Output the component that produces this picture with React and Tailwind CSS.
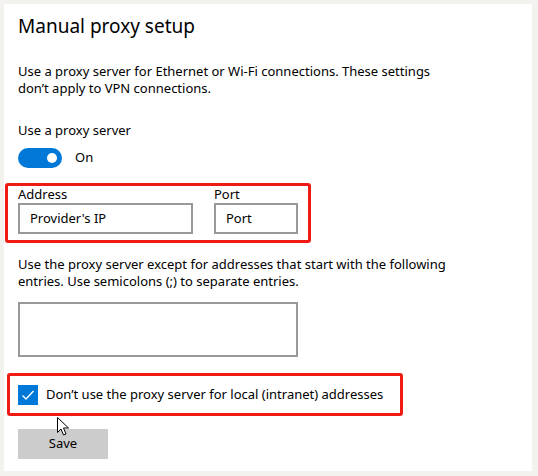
export default function App() {
  const font = { fontFamily: '"Noto Sans", "Open Sans", sans-serif' };
  return (
    <div className="w-[538px] h-[476px] bg-[#f3f2ee] p-[4px] relative" style={font}>
      <div className="w-[528px] h-[467px] bg-white pl-[14px] flex flex-col text-black">
        <div className="mt-[8px] text-[19px] leading-[28px]">Manual proxy setup</div>
        <div className="mt-[23px] text-[13px] leading-[17px] w-[430px]">
          Use a proxy server for Ethernet or Wi-Fi connections. These settings don’t apply to VPN connections.
        </div>
        <div className="mt-[23px] text-[13px] leading-[20px]">Use a proxy server</div>
        <div className="mt-[8px] flex items-center h-[20px]">
          <div className="w-[44px] h-[20px] rounded-full bg-[#0078d7] flex items-center justify-end pr-[5px]">
            <div className="w-[10px] h-[10px] rounded-full bg-white" />
          </div>
          <span className="ml-[13px] text-[13px]">On</span>
        </div>
        <div className="mt-[15px] ml-[-13px] w-[306px] h-[60px] border-[3px] border-[#f01a14] rounded-[3px] pl-[10px] flex gap-[21px]">
          <div className="flex flex-col">
            <div className="text-[13px] leading-[17px]">Address</div>
            <div className="w-[175px] h-[31px] border-2 border-[#999999] flex items-center pl-[10px] text-[13px]">Provider's IP</div>
          </div>
          <div className="flex flex-col">
            <div className="text-[13px] leading-[17px]">Port</div>
            <div className="w-[84px] h-[31px] border-2 border-[#999999] flex items-center pl-[10px] text-[13px]">Port</div>
          </div>
        </div>
        <div className="mt-[13px] text-[13px] leading-[17px] w-[440px]">
          Use the proxy server except for addresses that start with the following entries. Use semicolons (;) to separate entries.
        </div>
        <div className="mt-[12px] w-[280px] h-[55px] border-2 border-[#999999]" />
        <div className="mt-[16px] ml-[-11px] w-[396px] h-[43px] border-[3px] border-[#f01a14] rounded-[3px] pl-[8px] flex items-center">
          <div className="w-[20px] h-[20px] bg-[#0078d7] flex items-center justify-center">
            <svg width="14" height="14" viewBox="0 0 14 14">
              <path d="M1.5 7.5 L5 11 L12.5 3" fill="none" stroke="white" strokeWidth="1.4" />
            </svg>
          </div>
          <span className="ml-[8px] text-[13px]">Don’t use the proxy server for local (intranet) addresses</span>
        </div>
        <div className="mt-[13px] w-[90px] h-[30px] bg-[#cccccc] flex items-center justify-center text-[13px]">Save</div>
      </div>
      <svg className="absolute left-[57px] top-[417px]" width="13" height="20" viewBox="0 0 13 20">
        <path d="M0.5 0.5 L0.5 15.5 L4 12 L6.5 18 L9 17 L6.5 11 L11.5 11 Z" fill="white" stroke="black" strokeWidth="1" strokeLinejoin="miter" />
      </svg>
    </div>
  );
}
